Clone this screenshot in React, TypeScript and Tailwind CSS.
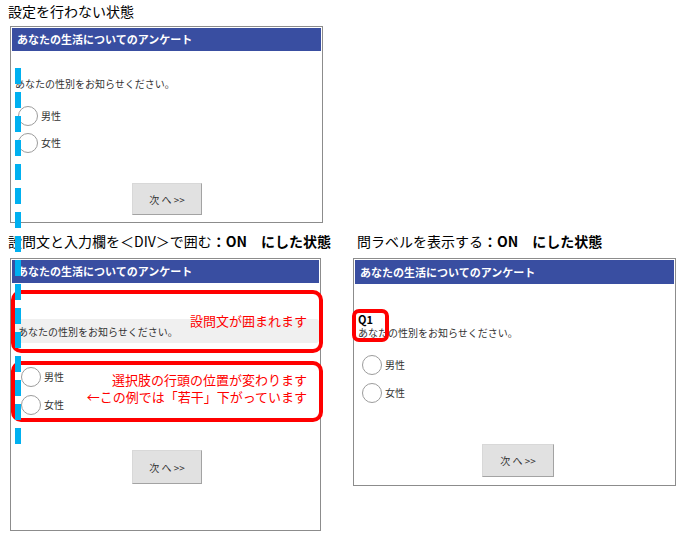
const jp = "font-['Noto_Sans_CJK_JP','Noto_Sans_CJK_SC',sans-serif]";

function SurveyHeader({ h }: { h: string }) {
  return (
    <div className={`${h} bg-[#394ea1] flex items-center pl-[5px] text-white font-bold text-[11px] leading-none`}>
      あなたの生活についてのアンケート
    </div>
  );
}

function Radio({ label }: { label: string }) {
  return (
    <div className="flex items-center gap-[3px]">
      <span className="w-5 h-5 rounded-full border border-[#9c9c9c] bg-white" />
      <span className="text-[10px] leading-[14px] text-[#333]">{label}</span>
    </div>
  );
}

function NextButton({ className }: { className: string }) {
  return (
    <button
      className={`${className} bg-[#e1e1e1] border border-[#d8d8d8] border-r-[#a3a3a3] border-b-[#a3a3a3] text-[10px] text-[#333] flex items-center justify-center`}
    >
      次 へ &gt;&gt;
    </button>
  );
}

export default function App() {
  return (
    <div className={`relative w-[680px] h-[536px] bg-white text-black overflow-hidden ${jp}`}>
      {/* 設定なし */}
      <div className="pl-2 pt-[2px] text-[14px] leading-[18px]">設定を行わない状態</div>
      <div className="ml-[10px] mt-[6px] w-[313px] h-[197px] border border-[#8c8c8c] p-px flex flex-col">
        <SurveyHeader h="h-[23px]" />
        <div className="pl-[3px] mt-[26px] text-[10px] leading-[14px] text-[#333]">
          あなたの性別をお知らせください。
        </div>
        <div className="pl-[6px] mt-[15px] flex flex-col gap-[7px]">
          <Radio label="男性" />
          <Radio label="女性" />
        </div>
        <NextButton className="mt-[30px] self-start ml-[120px] w-[70px] h-[32px]" />
      </div>

      <div className="flex pl-2 mt-[9px]">
        {/* DIVで囲む */}
        <div className="w-[313px]">
          <div className="text-[14px] leading-[18px] whitespace-nowrap">
            設問文と入力欄を＜DIV＞で囲む<span className="font-bold">：ON　にした状態</span>
          </div>
          <div className="ml-[2px] mt-[8px] w-[311px] h-[273px] border border-[#8c8c8c] p-px flex flex-col">
            <SurveyHeader h="h-[23px]" />
            <div className="ml-[2px] mt-[36px] h-[24px] rounded-[3px] bg-[#f0f0f0] pl-[4px] flex items-center text-[10px] text-[#333]">
              あなたの性別をお知らせください。
            </div>
            <div className="pl-[9px] mt-[24px] flex flex-col gap-[8px]">
              <Radio label="男性" />
              <Radio label="女性" />
            </div>
            <NextButton className="mt-[35px] self-start ml-[120px] w-[70px] h-[34px]" />
          </div>
        </div>

        {/* 問ラベル */}
        <div className="ml-[32px]">
          <div className="pl-[4px] text-[14px] leading-[18px] whitespace-nowrap">
            問ラベルを表示する<span className="font-bold">：ON　にした状態</span>
          </div>
          <div className="mt-[8px] w-[323px] h-[228px] border border-[#8c8c8c] p-px flex flex-col">
            <SurveyHeader h="h-[24px]" />
            <div className="pl-[3px] mt-[28px] text-[11px] leading-[14px] font-bold">Q1</div>
            <div className="pl-[3px] text-[10px] leading-[14px] text-[#333]">
              あなたの性別をお知らせください。
            </div>
            <div className="pl-[7px] mt-[15px] flex flex-col gap-[8px]">
              <Radio label="男性" />
              <Radio label="女性" />
            </div>
            <NextButton className="mt-[41px] self-start ml-[127px] w-[72px] h-[33px]" />
          </div>
        </div>
      </div>

      {/* 注釈 */}
      <div className="absolute left-[11px] top-[290px] w-[312px] h-[63px] border-[4px] border-[#ff0000] rounded-[10px]" />
      <div className="absolute left-[11px] top-[361px] w-[312px] h-[61px] border-[4px] border-[#ff0000] rounded-[10px]" />
      <div className="absolute left-[352px] top-[309px] w-[37px] h-[33px] border-[4px] border-[#ff0000] rounded-[7px]" />
      <div className="absolute left-[190px] top-[312px] text-[13px] leading-[18px] text-[#ff0000] whitespace-nowrap">
        設問文が囲まれます
      </div>
      <div className="absolute right-[373px] top-[371px] flex flex-col items-end text-[13px] leading-[17px] text-[#ff0000] whitespace-nowrap">
        <span>選択肢の行頭の位置が変わります</span>
        <span>←この例では「若干」下がっています</span>
      </div>
      <svg className="absolute left-[15px] top-[68px]" width="6" height="377" viewBox="0 0 6 377">
        <line x1="3" y1="0" x2="3" y2="377" stroke="#00b0f0" strokeWidth="6" strokeDasharray="16 8" />
      </svg>
    </div>
  );
}
